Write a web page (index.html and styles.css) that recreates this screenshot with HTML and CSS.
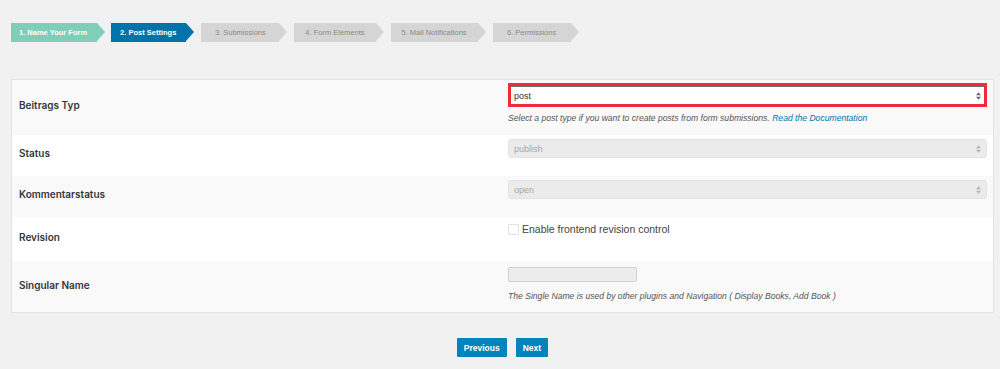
FILE: index.html
```html
<!DOCTYPE html>
<html lang="de">
<head>
    <meta charset="UTF-8">
    <meta name="viewport" content="width=device-width, initial-scale=1.0">
    <title>Post Settings</title>
    <link rel="stylesheet" href="styles.css">
</head>
<body>

<div class="steps">
    <div class="step done">1. Name Your Form</div>
    <div class="step active">2. Post Settings</div>
    <div class="step">3. Submissions</div>
    <div class="step">4. Form Elements</div>
    <div class="step">5. Mail Notifications</div>
    <div class="step">6. Permissions</div>
</div>

<div class="card">
    <div class="row row-type">
        <div class="label">Beitrags Typ</div>
        <div class="field">
            <div class="highlight">
                <div class="select select-main">
                    <span>post</span>
                    <svg class="arrows" width="5" height="8" viewBox="0 0 6 9"><path d="M0 3.5L3 0L6 3.5Z M0 5.5L3 9L6 5.5Z" fill="#666"/></svg>
                </div>
            </div>
            <p class="desc">Select a post type if you want to create posts from form submissions. <a href="#">Read the Documentation</a></p>
        </div>
    </div>

    <div class="row row-white row-status">
        <div class="label">Status</div>
        <div class="field">
            <div class="select disabled">
                <span>publish</span>
                <svg class="arrows" width="5" height="8" viewBox="0 0 6 9"><path d="M0 3.5L3 0L6 3.5Z M0 5.5L3 9L6 5.5Z" fill="#b5b5b5"/></svg>
            </div>
        </div>
    </div>

    <div class="row row-status">
        <div class="label">Kommentarstatus</div>
        <div class="field">
            <div class="select disabled">
                <span>open</span>
                <svg class="arrows" width="5" height="8" viewBox="0 0 6 9"><path d="M0 3.5L3 0L6 3.5Z M0 5.5L3 9L6 5.5Z" fill="#b5b5b5"/></svg>
            </div>
        </div>
    </div>

    <div class="row row-white row-revision">
        <div class="label">Revision</div>
        <div class="field">
            <label class="check"><span class="box"></span>Enable frontend revision control</label>
        </div>
    </div>

    <div class="row row-name">
        <div class="label">Singular Name</div>
        <div class="field">
            <div class="input"></div>
            <p class="desc">The Single Name is used by other plugins and Navigation ( Display Books, Add Book )</p>
        </div>
    </div>
</div>

<div class="buttons">
    <button class="btn">Previous</button>
    <button class="btn">Next</button>
</div>

</body>
</html>
```

FILE: styles.css
```css
body {
    margin: 0;
    padding: 23px 6px 0 11px;
    background-color: #f1f1f1;
    font-family: "Liberation Sans", Arial, sans-serif;
    color: #444;
}
.steps {
    display: flex;
    height: 19px;
}
.step {
    position: relative;
    min-width: 56px;
    height: 19px;
    line-height: 19px;
    padding: 0 11px;
    margin-right: 15px;
    background-color: #d5d5d5;
    color: #8a8a8a;
    font-size: 7.5px;
    text-align: center;
}
.step::after {
    content: "";
    position: absolute;
    top: 0;
    right: -8px;
    border-top: 9.5px solid transparent;
    border-bottom: 9.5px solid transparent;
    border-left: 8px solid #d5d5d5;
}
.step.done {
    padding: 0 10px 0 8px;
    margin-right: 14px;
    background-color: #7fceb8;
    color: #fff;
    font-weight: bold;
}
.step.done::after {
    border-left-color: #7fceb8;
}
.step.active {
    padding: 0 10px 0 9px;
    background-color: #0073aa;
    color: #fff;
    font-weight: bold;
}
.step.active::after {
    border-left-color: #0073aa;
}
.card {
    margin-top: 37px;
    background-color: #f9f9f9;
    border: 1px solid #e2e2e2;
}
.row {
    display: grid;
    grid-template-columns: 496px 1fr;
    background-color: #f9f9f9;
}
.row-white {
    background-color: #fff;
}
.label {
    padding-left: 7px;
    align-self: center;
    margin-bottom: 5px;
    font-family: Inter, "Liberation Sans", sans-serif;
    font-size: 10px;
    font-weight: 600;
    color: #32373c;
}
.field {
    padding-right: 6px;
}
.row-type {
    height: 55px;
}
.row-type .field {
    padding-top: 3px;
}
.row-status {
    height: 41px;
}
.row-status .field {
    padding-top: 4px;
}
.row-revision {
    height: 45px;
}
.row-revision .field {
    padding-top: 5px;
}
.row-name {
    height: 50px;
}
.row-name .field {
    padding-top: 5px;
}
.highlight {
    border: 3px solid #ed2b3a;
}
.select {
    display: flex;
    align-items: center;
    justify-content: space-between;
    height: 19px;
    padding: 0 5px;
    box-sizing: border-box;
    font-size: 9px;
    border-radius: 3px;
}
.select-main {
    height: 18px;
    background-color: #fff;
    color: #333;
    border-radius: 0;
    border-top: 1px solid #6e6e6e;
    padding: 0 3px 0 3px;
}
.select.disabled {
    background-color: #ebebeb;
    color: #a7a7a7;
    border: 1px solid #e3e3e3;
}
.desc {
    margin: 6px 0 0;
    font-size: 8.6px;
    font-style: italic;
    color: #555;
}
.desc a {
    color: #0073aa;
    text-decoration: none;
}
.check {
    display: flex;
    align-items: center;
    font-size: 10.5px;
    color: #444;
    line-height: 15px;
}
.check .box {
    width: 9px;
    height: 9px;
    margin-right: 3px;
    border: 1px solid #e1e1e1;
    border-radius: 1px;
    background-color: #fff;
}
.input {
    width: 129px;
    height: 15px;
    box-sizing: border-box;
    background-color: #ececec;
    border: 1px solid #d0d0d0;
    border-radius: 2px;
}
.row-name .desc {
    margin-top: 9px;
}
.buttons {
    display: flex;
    justify-content: center;
    gap: 9px;
    margin-top: 25px;
}
.btn {
    height: 19px;
    padding: 0 7px;
    background-color: #0085ba;
    color: #fff;
    border: none;
    border-radius: 1px;
    font-family: "Liberation Sans", Arial, sans-serif;
    font-size: 8.5px;
    font-weight: bold;
    cursor: pointer;
}
```
